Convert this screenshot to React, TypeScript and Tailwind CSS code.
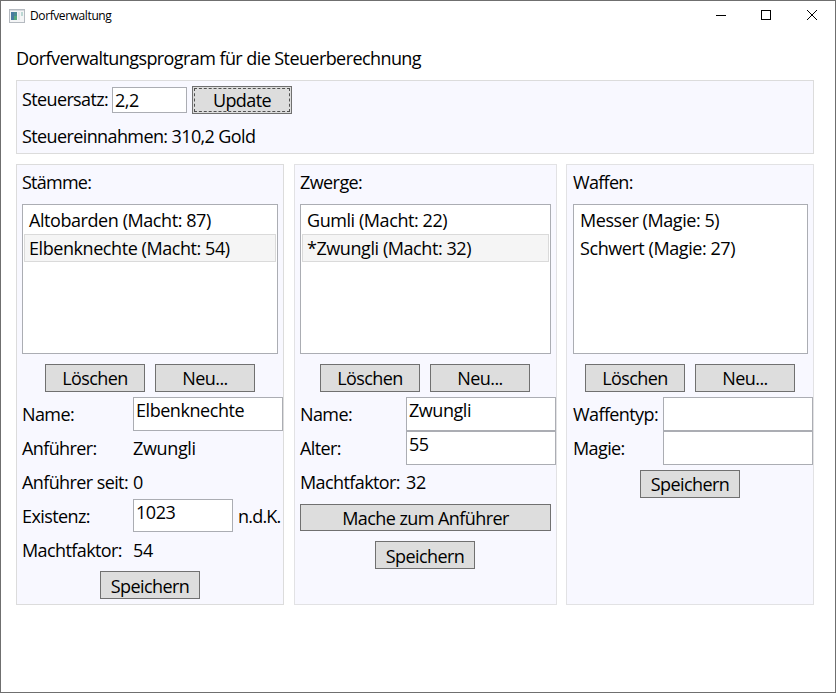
import type { ReactNode } from "react";

function Button({ children, className = "h-7 w-[100px]" }: { children: ReactNode; className?: string }) {
  return (
    <button className={`flex shrink-0 items-start justify-center border border-[#707070] bg-[#dddddd] leading-[26px] tracking-[-0.57px] ${className}`}>
      {children}
    </button>
  );
}

function Field({ value = "", className = "h-[34px] w-[150px]" }: { value?: string; className?: string }) {
  return (
    <div className={`shrink-0 border border-[#abadb3] bg-white pl-0.5 leading-[24px] tracking-[-0.45px] ${className}`}>{value}</div>
  );
}

function Row({ label, labelClass, children }: { label: string; labelClass: string; children: ReactNode }) {
  return (
    <div className="flex h-[34px] leading-[34px] tracking-[-0.35px]">
      <div className={`shrink-0 tracking-[-0.6px] ${labelClass}`}>{label}</div>
      {children}
    </div>
  );
}

function List({ items, selected = -1, className }: { items: string[]; selected?: number; className: string }) {
  return (
    <ul className={`h-[150px] border border-[#abadb3] bg-white p-px tracking-[-0.43px] ${className}`}>
      {items.map((item, i) => (
        <li
          key={item}
          className={`h-7 border pl-1 leading-[26px] ${i === selected ? "border-[#dadada] bg-[#f5f5f5]" : "border-transparent"}`}
        >
          {item}
        </li>
      ))}
    </ul>
  );
}

function Actions({ className }: { className: string }) {
  return (
    <div className={`mt-2.5 mb-[5px] flex gap-2.5 ${className}`}>
      <Button>Löschen</Button>
      <Button>Neu...</Button>
    </div>
  );
}

export default function App() {
  return (
    <div className="flex h-[693px] w-[836px] flex-col overflow-hidden border border-[#6f6f6f] bg-white font-['Open_Sans','Noto_Sans',sans-serif] text-[18px] tracking-[-0.58px] whitespace-nowrap text-black">
      <header className="flex h-[29px] shrink-0 items-center pl-2">
        <svg width="16" height="14" viewBox="0 0 16 14" className="shrink-0">
          <rect x="0.5" y="0.5" width="15" height="13" fill="#f4f5f6" stroke="#b5bac0" />
          <rect x="1" y="1" width="14" height="1" fill="#d5d9de" />
          <rect x="2" y="3" width="6" height="8" fill="#4b8b92" />
          <rect x="2" y="3" width="3" height="8" fill="#477ba0" />
          <rect x="5" y="7" width="3" height="4" fill="#55a77c" />
          <rect x="9" y="3" width="2" height="8" fill="#e4e7eb" />
          <rect x="12" y="3" width="2" height="4" fill="#bcd8d4" />
        </svg>
        <span className="ml-[5px] text-[12px] leading-[29px] tracking-[-0.4px]">Dorfverwaltung</span>
        <svg width="110" height="12" viewBox="0 0 110 12" className="mr-[13px] mb-px ml-auto" fill="none" stroke="#000" shapeRendering="crispEdges">
          <path d="M4 6.5h10" />
          <rect x="49.5" y="1.5" width="9" height="9" />
          <path d="M95 1l10 10M105 1L95 11" shapeRendering="auto" />
        </svg>
      </header>

      <main className="flex flex-col pl-[15px]">
        <h1 className="mt-[14px] h-9 leading-[28px]">Dorfverwaltungsprogram für die Steuerberechnung</h1>

        <section className="h-[74px] w-[798px] border border-[#dcdcdc] bg-[#f8f8ff] pl-[5px]">
          <div className="flex pt-[5px]">
            <span className="w-[90px] leading-[26px] tracking-[-0.63px]">Steuersatz:</span>
            <Field value="2,2" className="mt-px h-[26px] w-[75px]" />
            <div className="ml-[5px] flex h-7 w-[100px] border border-[#707070] bg-[#dddddd] p-px">
              <button className="grow border border-dashed border-[#505050] leading-[22px]">Update</button>
            </div>
          </div>
          <p className="mt-2 leading-[28px] tracking-[-0.61px]">Steuereinnahmen: 310,2 Gold</p>
        </section>

        <div className="mt-2.5 flex h-[441px]">
          <section className="w-[268px] border border-[#dcdcdc] bg-[#f8f8ff] pl-[5px]">
            <h2 className="h-[39px] pt-[3px] leading-[28px] tracking-[-0.75px]">Stämme:</h2>
            <List className="w-64" selected={1} items={["Altobarden (Macht: 87)", "Elbenknechte (Macht: 54)"]} />
            <Actions className="ml-[23px]" />
            <Row label="Name:" labelClass="w-[111px]"><Field value="Elbenknechte" /></Row>
            <Row label="Anführer:" labelClass="w-[111px]">Zwungli</Row>
            <Row label="Anführer seit:" labelClass="w-[111px]">0</Row>
            <Row label="Existenz:" labelClass="w-[111px]">
              <Field value="1023" className="h-[33px] w-[100px]" />
              <span className="ml-[5px] tracking-[-0.8px]">n.d.K.</span>
            </Row>
            <Row label="Machtfaktor:" labelClass="w-[111px]">54</Row>
            <Button className="mt-1 ml-[78px] h-7 w-[100px] pt-px">Speichern</Button>
          </section>

          <section className="ml-2.5 w-[263px] border border-[#e2e2e4] bg-[#f8f8ff] pl-[5px]">
            <h2 className="h-[39px] pt-[3px] leading-[28px]">Zwerge:</h2>
            <List className="w-[251px]" selected={1} items={["Gumli (Macht: 22)", "*Zwungli (Macht: 32)"]} />
            <Actions className="ml-5" />
            <Row label="Name:" labelClass="w-[106px]"><Field value="Zwungli" /></Row>
            <Row label="Alter:" labelClass="w-[106px]"><Field value="55" /></Row>
            <Row label="Machtfaktor:" labelClass="w-[106px]">32</Row>
            <Button className="mt-[5px] h-[27px] w-[251px]">Mache zum Anführer</Button>
            <Button className="mt-2.5 ml-[75px] h-7 w-[100px] pt-px">Speichern</Button>
          </section>

          <section className="ml-[9px] w-[248px] border border-[#e2e2e4] bg-[#f8f8ff] pl-[6px]">
            <h2 className="h-[39px] pt-[3px] leading-[28px] tracking-[-0.7px]">Waffen:</h2>
            <List className="w-[235px]" items={["Messer (Magie: 5)", "Schwert (Magie: 27)"]} />
            <Actions className="ml-3" />
            <Row label="Waffentyp:" labelClass="w-[90px]"><Field /></Row>
            <Row label="Magie:" labelClass="w-[90px]"><Field /></Row>
            <Button className="mt-[5px] ml-[67px] h-7 w-[100px]">Speichern</Button>
          </section>
        </div>
      </main>
    </div>
  );
}
